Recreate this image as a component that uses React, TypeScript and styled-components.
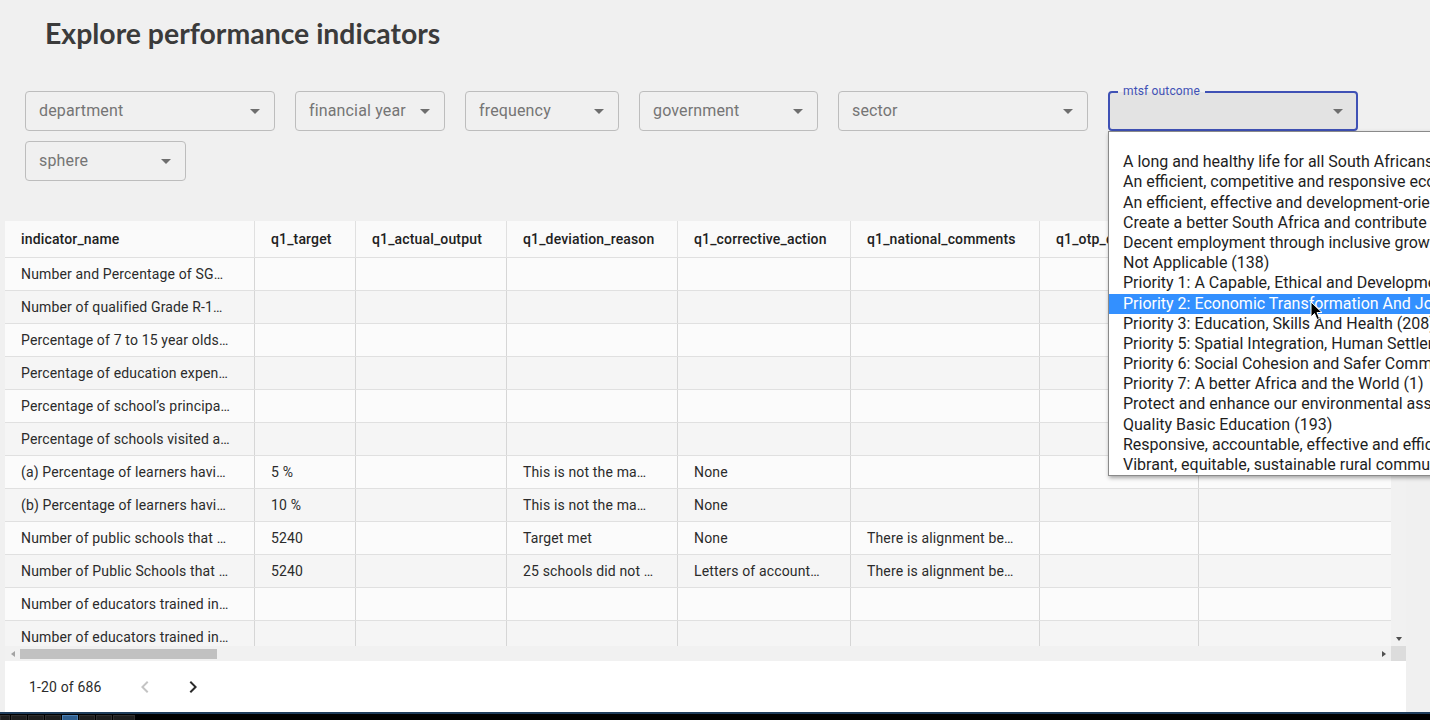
import React from 'react';
import styled, { createGlobalStyle } from 'styled-components';

const GlobalStyle = createGlobalStyle`
  html, body { margin: 0; padding: 0; height: 100%; overflow: hidden; background: #f0f0f0; }
  body { font-family: Roboto, "Liberation Sans", Arial, sans-serif; }
  #root { height: 100%; }
  * { box-sizing: border-box; }
`;

const Page = styled.div`
  position: relative;
  width: 1430px;
  height: 720px;
  display: flex;
  flex-direction: column;
  overflow: hidden;
  background: #f0f0f0;
`;

const Title = styled.h1`
  margin: 16px 0 0 45px;
  font-family: Lato, "Open Sans", sans-serif;
  font-weight: 700;
  font-size: 28.4px;
  line-height: 35px;
  color: #3b3b3b;
`;

const Filters = styled.div`
  display: flex;
  flex-wrap: wrap;
  column-gap: 20px;
  row-gap: 10px;
  margin-top: 40px;
  padding-left: 25px;
  position: relative;
  z-index: 5;
`;

const SelectBox = styled.div<{ $w: number; $focused?: boolean }>`
  position: relative;
  flex: 0 0 auto;
  width: ${(p) => p.$w}px;
  height: 40px;
  border: ${(p) => (p.$focused ? '2px solid #3f51b5' : '1px solid #bdbdbd')};
  border-radius: 4px;
  background: ${(p) => (p.$focused ? '#e3e3e3' : 'transparent')};
  display: flex;
  align-items: center;
  padding-left: ${(p) => (p.$focused ? 12 : 13)}px;
  padding-right: ${(p) => (p.$focused ? 6 : 7)}px;
  padding-bottom: 1px;
  font-size: 16px;
  letter-spacing: 0.15px;
  color: #757575;
`;

const SelectText = styled.span`
  flex: 1;
  white-space: nowrap;
  overflow: hidden;
`;

const Arrow = styled.svg`
  width: 24px;
  height: 24px;
  flex: 0 0 24px;
  fill: #6e6e6e;
`;

const FloatLabel = styled.span`
  position: absolute;
  top: -9px;
  left: 8px;
  padding: 0 5px;
  font-size: 12px;
  line-height: 14px;
  letter-spacing: 0.15px;
  color: #3f51b5;
  background: linear-gradient(to bottom, #f0f0f0 0, #f0f0f0 8px, #e3e3e3 8px);
`;

const Menu = styled.div`
  position: absolute;
  left: -2px;
  top: 38px;
  width: 440px;
  background: #fff;
  border: 1px solid #8a8a8a;
  box-shadow: 1px 2px 4px rgba(0, 0, 0, 0.35);
  z-index: 20;
  letter-spacing: 0;
`;

const MenuItem = styled.div<{ $active?: boolean }>`
  height: 20.2px;
  line-height: 20.2px;
  padding-left: 14px;
  white-space: nowrap;
  font-size: 16px;
  color: ${(p) => (p.$active ? '#fff' : '#1e1e1e')};
  background: ${(p) => (p.$active ? '#3390ff' : 'transparent')};
`;

const Cursor = styled.svg`
  position: absolute;
  left: 201px;
  top: 169px;
  width: 13px;
  height: 20px;
`;

const Card = styled.div`
  flex: 1;
  min-height: 0;
  margin: 40px 24px 0 5px;
  display: flex;
  flex-direction: column;
  background: #fff;
`;

const GridArea = styled.div`
  flex: 1;
  min-height: 0;
  display: grid;
  grid-template-columns: 1fr 15px;
  grid-template-rows: 1fr 15px;
`;

const Viewport = styled.div`
  overflow: hidden;
  min-width: 0;
  min-height: 0;
  background: #fbfbfb;
`;

const COLS = [250, 101, 151, 171, 173, 189, 159, 250];
const TEMPLATE = COLS.map((w) => `${w}px`).join(' ');

const HeaderRow = styled.div`
  display: grid;
  grid-template-columns: ${TEMPLATE};
  width: max-content;
  height: 37px;
  background: #fafafa;
  border-bottom: 1px solid #e0e0e0;
`;

const HeaderCell = styled.div`
  display: flex;
  align-items: center;
  padding: 0 16px;
  border-right: 1px solid #e0e0e0;
  font-size: 14px;
  font-weight: 500;
  letter-spacing: 0.15px;
  color: #212121;
  white-space: nowrap;
  overflow: hidden;
`;

const Row = styled.div<{ $alt?: boolean }>`
  display: grid;
  grid-template-columns: ${TEMPLATE};
  width: max-content;
  height: 33px;
  border-bottom: 1px solid #e0e0e0;
  background: ${(p) => (p.$alt ? '#f5f5f5' : '#fbfbfb')};
`;

const Cell = styled.div`
  display: flex;
  align-items: center;
  padding: 0 16px;
  border-right: 1px solid #d6d6d6;
  font-size: 14px;
  letter-spacing: 0.15px;
  color: #2b2b2b;
  white-space: nowrap;
  overflow: hidden;
`;

const VScroll = styled.div`
  background: #f1f1f1;
  display: flex;
  flex-direction: column;
  justify-content: flex-end;
`;

const HScroll = styled.div`
  background: #f1f1f1;
  display: flex;
  align-items: flex-start;
`;

const ScrollBtn = styled.div`
  width: 15px;
  height: 15px;
  flex: 0 0 15px;
  display: flex;
  align-items: center;
  justify-content: center;
`;

const Tri = styled.span<{ $dir: 'down' | 'left' | 'right'; $dim?: boolean }>`
  width: 0;
  height: 0;
  border-style: solid;
  ${(p) =>
    p.$dir === 'down'
      ? `border-width: 4px 3.5px 0 3.5px; border-color: #505050 transparent transparent transparent;`
      : p.$dir === 'left'
      ? `border-width: 3.5px 4px 3.5px 0; border-color: transparent ${p.$dim ? '#a3a3a3' : '#505050'} transparent transparent;`
      : `border-width: 3.5px 0 3.5px 4px; border-color: transparent transparent transparent #505050;`}
`;

const Thumb = styled.div`
  width: 197px;
  height: 10px;
  margin-top: 3px;
  background: #c1c1c1;
`;

const Spacer = styled.div`
  flex: 1;
`;

const Corner = styled.div`
  background: #dcdcdc;
`;

const Pagination = styled.div`
  height: 51px;
  flex: 0 0 51px;
  display: flex;
  align-items: center;
  padding-left: 24px;
  background: #fff;
`;

const PageInfo = styled.span`
  font-size: 14px;
  letter-spacing: 0.15px;
  color: #2b2b2b;
  margin-right: 19px;
`;

const IconButton = styled.div<{ $disabled?: boolean }>`
  width: 48px;
  height: 48px;
  display: flex;
  align-items: center;
  justify-content: center;
  svg {
    width: 24px;
    height: 24px;
    fill: ${(p) => (p.$disabled ? '#c4c4c4' : '#2b2b2b')};
  }
`;

const Taskbar = styled.div`
  height: 8px;
  flex: 0 0 8px;
  background: #000;
  border-top: 2px solid #1f3d5c;
  display: flex;
  gap: 1px;
  padding-top: 1px;
`;

const Tile = styled.div<{ $w: number; $active?: boolean }>`
  width: ${(p) => p.$w}px;
  height: 100%;
  background: ${(p) => (p.$active ? '#2f5f8f' : '#1e1e1e')};
  border: 1px solid ${(p) => (p.$active ? '#4a7fb3' : '#2e2e2e')};
  border-bottom: none;
`;

const filters = [
  { label: 'department', w: 250 },
  { label: 'financial year', w: 150 },
  { label: 'frequency', w: 154 },
  { label: 'government', w: 179 },
  { label: 'sector', w: 250 },
  { label: 'mtsf outcome', w: 250, focused: true },
  { label: 'sphere', w: 161 },
];

const options = [
  '',
  'A long and healthy life for all South Africans (12)',
  'An efficient, competitive and responsive economic infrastructure network (4)',
  'An efficient, effective and development-oriented public service (21)',
  'Create a better South Africa and contribute to a better Africa and a better world (2)',
  'Decent employment through inclusive growth (9)',
  'Not Applicable (138)',
  'Priority 1: A Capable, Ethical and Developmental State (31)',
  'Priority 2: Economic Transformation And Job Creation (14)',
  'Priority 3: Education, Skills And Health (208)',
  'Priority 5: Spatial Integration, Human Settlements and Local Government (3)',
  'Priority 6: Social Cohesion and Safer Communities (6)',
  'Priority 7: A better Africa and the World (1)',
  'Protect and enhance our environmental assets and natural resources (2)',
  'Quality Basic Education (193)',
  'Responsive, accountable, effective and efficient local government (5)',
  'Vibrant, equitable, sustainable rural communities (3)',
];

const headers = [
  'indicator_name',
  'q1_target',
  'q1_actual_output',
  'q1_deviation_reason',
  'q1_corrective_action',
  'q1_national_comments',
  'q1_otp_comments',
  'q2_target',
];

const rows: string[][] = [
  ['Number and Percentage of SG…'],
  ['Number of qualified Grade R-1…'],
  ['Percentage of 7 to 15 year olds…'],
  ['Percentage of education expen…'],
  ['Percentage of school’s principa…'],
  ['Percentage of schools visited a…'],
  ['(a) Percentage of learners havi…', '5 %', '', 'This is not the ma…', 'None'],
  ['(b) Percentage of learners havi…', '10 %', '', 'This is not the ma…', 'None'],
  ['Number of public schools that …', '5240', '', 'Target met', 'None', 'There is alignment be…'],
  ['Number of Public Schools that …', '5240', '', '25 schools did not …', 'Letters of account…', 'There is alignment be…'],
  ['Number of educators trained in…'],
  ['Number of educators trained in…'],
];

const tiles = [
  { w: 10 },
  { w: 16 },
  { w: 16 },
  { w: 16 },
  { w: 16, active: true },
  { w: 16 },
  { w: 16 },
  { w: 22 },
];

const DropArrow = () => (
  <Arrow viewBox="0 0 24 24">
    <path d="M7 10l5 5 5-5z" />
  </Arrow>
);

export default function App() {
  return (
    <Page>
      <GlobalStyle />
      <Title>Explore performance indicators</Title>
      <Filters>
        {filters.map((f) => (
          <SelectBox key={f.label} $w={f.w} $focused={f.focused}>
            {f.focused ? (
              <>
                <FloatLabel>{f.label}</FloatLabel>
                <SelectText />
                <DropArrow />
                <Menu>
                  {options.map((o, i) => (
                    <MenuItem key={i} $active={i === 8}>
                      {o}
                    </MenuItem>
                  ))}
                  <Cursor viewBox="0 0 13 20">
                    <path
                      d="M1 1 L1 16 L4.5 12.5 L7 18.5 L9.5 17.5 L7 11.5 L12 11.5 Z"
                      fill="#000"
                      stroke="#fff"
                      strokeWidth="1"
                      strokeLinejoin="round"
                    />
                  </Cursor>
                </Menu>
              </>
            ) : (
              <>
                <SelectText>{f.label}</SelectText>
                <DropArrow />
              </>
            )}
          </SelectBox>
        ))}
      </Filters>
      <Card>
        <GridArea>
          <Viewport>
            <HeaderRow>
              {headers.map((h) => (
                <HeaderCell key={h}>{h}</HeaderCell>
              ))}
            </HeaderRow>
            {rows.map((r, i) => (
              <Row key={i} $alt={i % 2 === 1}>
                {headers.map((_, c) => (
                  <Cell key={c}>{r[c] ?? ''}</Cell>
                ))}
              </Row>
            ))}
          </Viewport>
          <VScroll>
            <ScrollBtn>
              <Tri $dir="down" />
            </ScrollBtn>
          </VScroll>
          <HScroll>
            <ScrollBtn>
              <Tri $dir="left" $dim />
            </ScrollBtn>
            <Thumb />
            <Spacer />
            <ScrollBtn>
              <Tri $dir="right" />
            </ScrollBtn>
          </HScroll>
          <Corner />
        </GridArea>
        <Pagination>
          <PageInfo>1-20 of 686</PageInfo>
          <IconButton $disabled>
            <svg viewBox="0 0 24 24">
              <path d="M15.41 7.41L14 6l-6 6 6 6 1.41-1.41L10.83 12z" />
            </svg>
          </IconButton>
          <IconButton>
            <svg viewBox="0 0 24 24">
              <path d="M10 6L8.59 7.41 13.17 12l-4.58 4.59L10 18l6-6z" />
            </svg>
          </IconButton>
        </Pagination>
      </Card>
      <Taskbar>
        {tiles.map((t, i) => (
          <Tile key={i} $w={t.w} $active={t.active} />
        ))}
      </Taskbar>
    </Page>
  );
}
